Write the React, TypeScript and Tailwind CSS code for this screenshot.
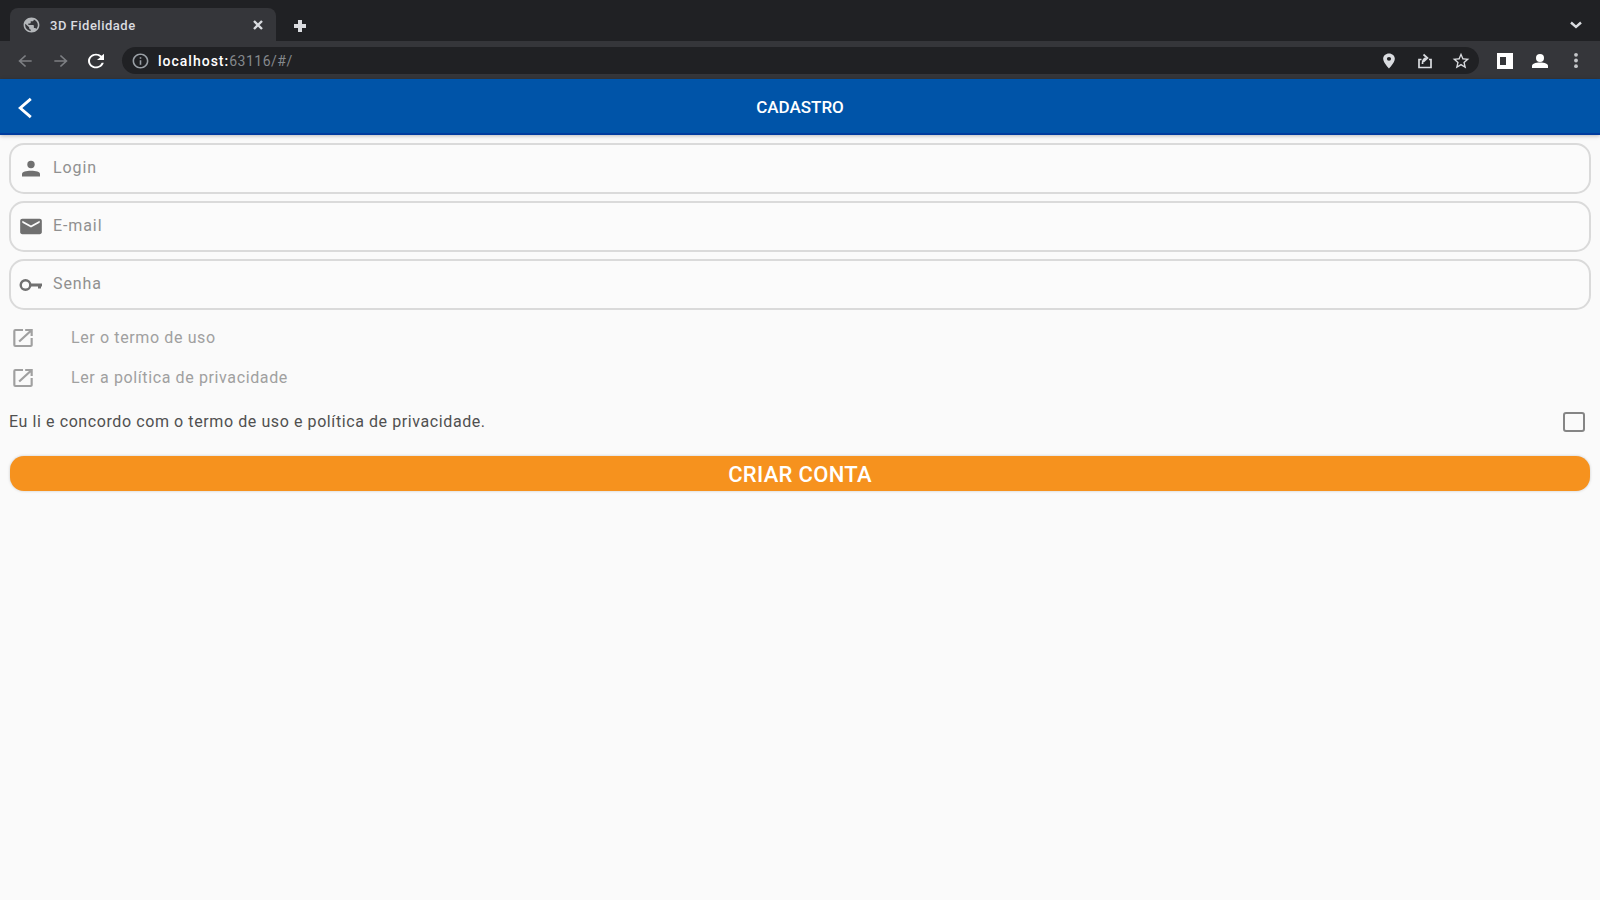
import { useState } from 'react';
import type { ReactNode } from 'react';
import {
  MdArrowBack,
  MdArrowForward,
  MdEmail,
  MdInfoOutline,
  MdLocationOn,
  MdOpenInNew,
  MdPublic,
  MdRefresh,
  MdStarBorder,
} from 'react-icons/md';

function BrowserBar() {
  return (
    <header className="bg-[#202124] text-[#dadce0]">
      <div className="flex h-[41px] items-end pl-[10px] pr-[17px]">
        <div className="flex h-[33px] w-[266px] items-center rounded-t-lg bg-[#35363a] pl-3 pr-[12px] pt-[1px]">
          <MdPublic className="h-[18px] w-[19px] text-[#b4b7ba]" preserveAspectRatio="none" />
          <span className="ml-[9px] flex-1 pt-[1px] text-[13px] font-medium tracking-[0.5px]">3D Fidelidade</span>
          <svg viewBox="0 0 12 12" className="h-[12px] w-[12px]" fill="none" stroke="currentColor" strokeWidth="2.4">
            <path d="M2 2l8 8M10 2l-8 8" />
          </svg>
        </div>
        <svg viewBox="0 0 14 14" className="mb-[8px] ml-[17px] h-[14px] w-[14px]" fill="none" stroke="currentColor" strokeWidth="4">
          <path d="M7 1v12M1 7h12" />
        </svg>
        <svg viewBox="0 0 14 10" className="mb-[11px] ml-auto h-[10px] w-[14px]" fill="none" stroke="currentColor" strokeWidth="2.4">
          <path d="M2 2.500l5 4.500 5-4.500" />
        </svg>
      </div>
      <div className="flex h-[38px] items-center bg-[#35363a] pl-[15px] pr-[21px] pt-[1px]">
        <MdArrowBack className="h-[18px] w-[20px] text-[#7d7f83]" preserveAspectRatio="none" />
        <MdArrowForward className="ml-[16px] h-[18px] w-[20px] text-[#7d7f83]" preserveAspectRatio="none" />
        <MdRefresh className="ml-[13px] h-[22px] w-[24px] text-white" preserveAspectRatio="none" />
        <div className="ml-[14px] flex h-[27px] flex-1 items-center rounded-full bg-[#202124] pl-[9px] pr-[8px]">
          <MdInfoOutline className="h-[18px] w-[19px] text-[#9aa0a6]" preserveAspectRatio="none" />
          <span className="ml-[8px] flex-1 pt-[1px] text-[14px] tracking-[0.5px] text-[#85898d]">
            <span className="font-medium tracking-[1px] text-white">localhost:</span>63116/#/
          </span>
          <MdLocationOn className="h-[18px] w-[20px]" preserveAspectRatio="none" />
          <svg viewBox="0 0 16 16" className="ml-[18px] h-[18px] w-[16px]" fill="none" stroke="currentColor" strokeWidth="1.7">
            <path d="M4.500 6.500H2v8h12v-8h-2M5.500 11c0-3 .5-5 3-6M6.500 1.500L10.500 5l-4 3.500" />
          </svg>
          <MdStarBorder className="ml-[18px] h-[20px] w-[20px]" preserveAspectRatio="none" />
        </div>
        <svg viewBox="0 0 18 16" className="ml-[17px] h-[16px] w-[18px]">
          <path fill="#fff" fillRule="evenodd" d="M1 0h16v16H1zM4 4v8h6V4z" />
        </svg>
        <svg viewBox="0 0 16 14" className="ml-[18px] h-[14px] w-[16px]" fill="#fff">
          <circle cx="8" cy="4" r="4" />
          <path d="M0 14v-2c0-2 3-3.500 8-3.500s8 1.500 8 3.500v2z" />
        </svg>
        <svg viewBox="0 0 6 18" className="ml-[25px] h-[17px] w-[6px]" fill="#c4c6c9">
          <circle cx="3" cy="3" r="2" />
          <circle cx="3" cy="9" r="2" />
          <circle cx="3" cy="15" r="2" />
        </svg>
      </div>
    </header>
  );
}

function PersonIcon() {
  return (
    <svg viewBox="0 0 20 17" className="h-[17px] w-[20px]" fill="currentColor">
      <circle cx="10" cy="4.500" r="3.700" />
      <path d="M1 16.500V14c0-2.300 4-3.300 9-3.300s9 1 9 3.300v2.500z" />
    </svg>
  );
}

function KeyIcon() {
  return (
    <svg viewBox="0 0 24 14" className="h-[14px] w-[24px]" fill="none" stroke="currentColor" strokeWidth="2.400">
      <circle cx="6.500" cy="7" r="4.800" />
      <path d="M11 7h12M20.500 7v3.500" strokeWidth="3" />
    </svg>
  );
}

interface FieldProps {
  icon: ReactNode;
  label: string;
  type?: string;
}

function Field({ icon, label, type = 'text' }: FieldProps) {
  return (
    <label className="flex h-[51px] items-center rounded-[15px] border-2 border-[#dadada] bg-[#fbfbfb] pl-[7px]">
      <span className="flex w-[26px] justify-center text-[#707070]">{icon}</span>
      <input
        type={type}
        placeholder={label}
        className="ml-[9px] flex-1 bg-transparent pb-[2px] text-[16px] tracking-[0.9px] outline-none placeholder:text-[#909090]"
      />
    </label>
  );
}

function DocLink({ children }: { children: ReactNode }) {
  return (
    <button className="flex h-[40px] w-full items-center pl-[1px] text-left text-[#a0a0a0]">
      <MdOpenInNew className="h-[24px] w-[26px]" preserveAspectRatio="none" />
      <span className="ml-[35px] text-[16px] tracking-[0.62px]">{children}</span>
    </button>
  );
}

export default function App() {
  const [accepted, setAccepted] = useState(false);

  return (
    <div className="h-screen overflow-hidden bg-[#fafafa] font-['Roboto',sans-serif]">
      <BrowserBar />
      <div className="flex h-[56px] items-center border-b-2 border-[#003c9e] bg-[#0054a8] px-[14px] pt-[2px] text-white shadow-[0_1px_4px_rgba(0,0,0,0.25)]">
        <button className="w-[24px]">
          <svg viewBox="0 0 24 24" className="h-[23px] w-[24px]" fill="none" stroke="currentColor" strokeWidth="3">
            <path d="M17 3L6 12.500l11 9.500" />
          </svg>
        </button>
        <h1 className="flex-1 pr-[24px] pt-[1px] text-center text-[17px] font-medium">CADASTRO</h1>
      </div>
      <main className="px-[9px] pt-[8px]">
        <div className="flex flex-col gap-[7px]">
          <Field icon={<PersonIcon />} label="Login" />
          <Field icon={<MdEmail className="h-[23px] w-[26px]" preserveAspectRatio="none" />} label="E-mail" />
          <Field icon={<KeyIcon />} label="Senha" type="password" />
        </div>
        <div className="mt-[8px]">
          <DocLink>Ler o termo de uso</DocLink>
          <DocLink>Ler a política de privacidade</DocLink>
        </div>
        <label className="flex h-[48px] items-center justify-between pr-[6px] text-[16px] tracking-[0.59px] text-[#505050]">
          Eu li e concordo com o termo de uso e política de privacidade.
          <input
            type="checkbox"
            checked={accepted}
            onChange={(e) => setAccepted(e.target.checked)}
            className="h-[20px] w-[22px] appearance-none rounded-[3px] border-2 border-[#858585] checked:bg-[#0054a8]"
          />
        </label>
        <button className="mx-[1px] mt-[10px] flex h-[35px] w-[1580px] items-center justify-center rounded-[14px] bg-[#f6921e] pt-[1px] text-[22px] font-medium tracking-[0.3px] text-white shadow-[0_0_3px_rgba(0,0,0,0.2)]">
          CRIAR CONTA
        </button>
      </main>
    </div>
  );
}
